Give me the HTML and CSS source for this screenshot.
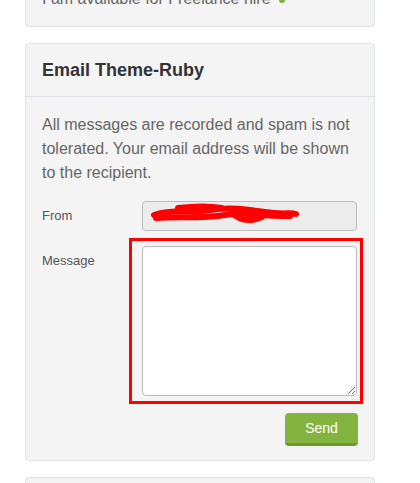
FILE: index.html
```html
<!DOCTYPE html>
<html lang="en">
<head>
  <meta charset="UTF-8" />
  <meta name="viewport" content="width=device-width, initial-scale=1" />
  <title>Email Theme-Ruby</title>
  <link rel="stylesheet" href="styles.css">
</head>
<body>
  <div class="sidebar">
    <section class="card">
      <div class="card-body">
        <p class="hire">I am available for Freelance hire <span class="hire-dot"></span></p>
      </div>
    </section>

    <section class="card">
      <div class="card-header">
        <h2>Email Theme-Ruby</h2>
      </div>
      <div class="card-body">
        <p class="note">All messages are recorded and spam is not tolerated. Your email address will be shown to the recipient.</p>
        <form class="email-form">
          <label class="form-label">From</label>
          <div class="from-field">
            <svg class="scribble" width="150" height="22" viewBox="0 0 150 22">
              <path d="M4 12 C20 6 40 10 60 7 S95 6 115 9 S140 9 146 11" />
              <path d="M6 15 C30 13 50 16 75 12 S110 14 140 13" />
              <path d="M28 5 C45 3 60 3 72 5" />
              <path d="M82 10 C90 18 100 19 112 14" />
            </svg>
          </div>
          <label class="form-label">Message</label>
          <div class="message-wrap">
            <textarea class="message"></textarea>
            <span class="highlight"></span>
          </div>
          <div class="actions">
            <button type="button" class="send-btn">Send</button>
          </div>
        </form>
      </div>
    </section>

    <section class="card">
      <div class="card-header">
        <h2>&nbsp;</h2>
      </div>
    </section>
  </div>
</body>
</html>
```

FILE: styles.css
```css
:root {
  --card-bg: #f4f4f4;
  --card-border: #dfe3e6;
  --text: #333333;
  --muted: #666666;
  --label: #555555;
  --green: #84b440;
  --green-dark: #6e9a31;
}
* { box-sizing: border-box; }
body {
  margin: 0;
  background: #ffffff;
  font-family: 'Liberation Sans', Arial, sans-serif;
  color: var(--text);
}
.sidebar {
  width: 350px;
  margin: -30px 0 0 25px;
  display: flex;
  flex-direction: column;
  gap: 16px;
}
.card {
  background: var(--card-bg);
  border: 1px solid var(--card-border);
  border-radius: 4px;
}
.card-header {
  padding: 14px 16px 14px;
  border-bottom: 1px solid var(--card-border);
}
.card-header h2 {
  margin: 0;
  font-size: 18px;
  line-height: 24px;
  font-weight: 700;
  color: var(--text);
}
.card-body {
  padding: 16px 16px 14px;
}
.hire {
  margin: 0 0 1px;
  font-size: 16px;
  line-height: 24px;
  color: var(--muted);
}
.hire-dot {
  display: inline-block;
  width: 6px;
  height: 6px;
  margin-left: 4px;
  border-radius: 50%;
  background: #7bb33a;
  vertical-align: middle;
}
.note {
  margin: 0 0 16px;
  font-size: 16px;
  line-height: 24px;
  color: var(--muted);
}
.email-form {
  display: grid;
  grid-template-columns: 100px 1fr;
  row-gap: 15px;
  align-items: start;
}
.form-label {
  padding-top: 7px;
  font-size: 13px;
  line-height: 16px;
  color: var(--label);
}
.from-field {
  height: 30px;
  margin-right: 1px;
  background: #ececec;
  border: 1px solid #bbbbbb;
  border-radius: 4px;
  padding: 1px 0 0 7px;
}
.scribble path {
  fill: none;
  stroke: #ff0000;
  stroke-width: 6;
  stroke-linecap: round;
}
.message-wrap {
  position: relative;
  margin-right: 1px;
  margin-bottom: 2px;
}
.message {
  display: block;
  width: 100%;
  height: 150px;
  background: #ffffff;
  border: 1px solid #bbbbbb;
  border-radius: 4px;
  font-family: inherit;
}
.highlight {
  position: absolute;
  top: -8px;
  bottom: -8px;
  left: -13px;
  right: -6px;
  border: 3px solid #ff0000;
  pointer-events: none;
}
.actions {
  grid-column: 1 / -1;
  display: flex;
  justify-content: flex-end;
}
.send-btn {
  width: 73px;
  height: 33px;
  background: var(--green);
  border: none;
  border-bottom: 3px solid var(--green-dark);
  border-radius: 4px;
  color: #ffffff;
  font-family: inherit;
  font-size: 14px;
  cursor: pointer;
}
```
